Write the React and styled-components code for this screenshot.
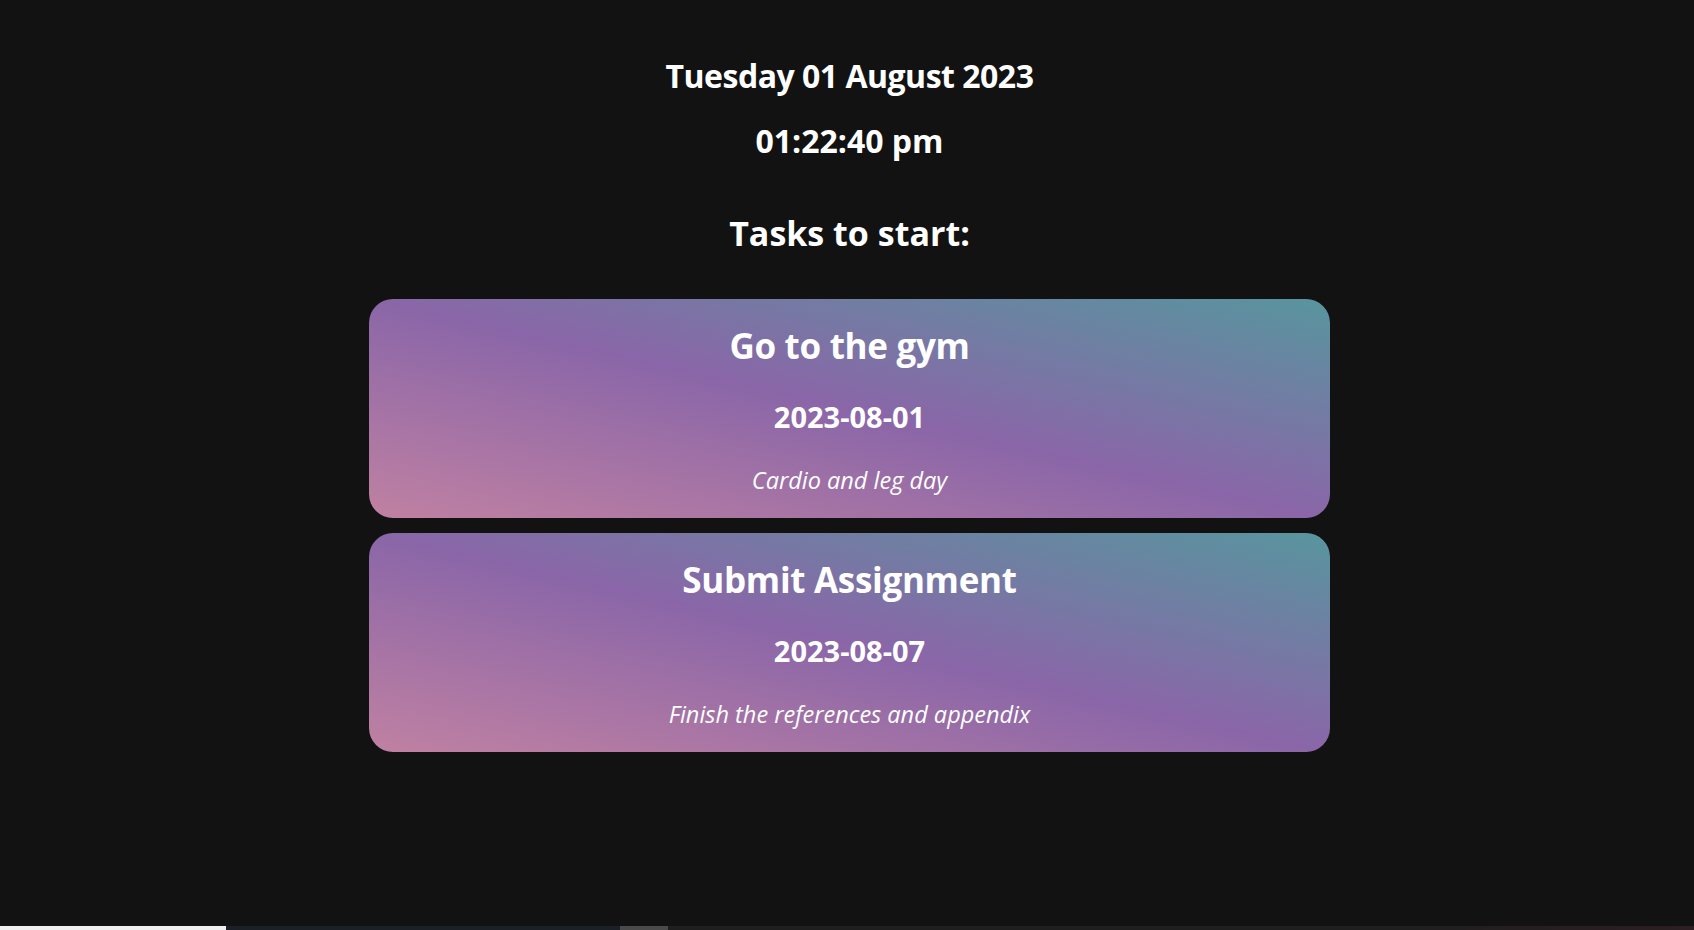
import styled, { createGlobalStyle } from "styled-components";

const GlobalStyle = createGlobalStyle`
  html, body {
    margin: 0;
    padding: 0;
    background: #121212;
  }
  body {
    font-family: "Open Sans", "Noto Sans", sans-serif;
    color: #ffffff;
  }
`;

const Page = styled.div`
  display: flex;
  flex-direction: column;
  height: 100vh;
  overflow: hidden;
`;

const Main = styled.main`
  flex: 1;
  display: flex;
  flex-direction: column;
  align-items: center;
  padding: 55.5px 0 0 5px;
`;

const Clock = styled.div`
  display: flex;
  flex-direction: column;
  align-items: center;
  gap: 25px;
`;

const ClockLine = styled.h2`
  margin: 0;
  font-size: 32px;
  line-height: 40px;
  font-weight: 700;
  letter-spacing: ${(p) => (p.$tight ? "-0.5px" : "0")};
`;

const Heading = styled.h1`
  margin: 51px 0 45px;
  font-size: 34px;
  line-height: 42px;
  font-weight: 700;
`;

const TaskList = styled.div`
  display: flex;
  flex-direction: column;
  gap: 15px;
  width: 961px;
`;

const Card = styled.div`
  display: flex;
  flex-direction: column;
  align-items: center;
  gap: 32px;
  padding: 25px 0 24px;
  border-radius: 24px;
  background: linear-gradient(to top right, #c081a2 0%, #8a66a8 50%, #58959e 100%);
`;

const CardTitle = styled.h3`
  margin: 0;
  font-size: 35px;
  line-height: 44px;
  font-weight: 700;
  letter-spacing: -0.3px;
`;

const CardDate = styled.h4`
  margin: 0;
  font-size: 29px;
  line-height: 34px;
  font-weight: 700;
`;

const CardNote = styled.p`
  margin: 0;
  font-size: 23.5px;
  line-height: 28px;
  font-style: italic;
`;

const Strip = styled.div`
  display: flex;
  height: 4px;
  flex-shrink: 0;
`;

const StripPart = styled.div`
  width: ${(p) => (p.w ? `${p.w}px` : "auto")};
  flex: ${(p) => (p.w ? "none" : "1")};
  background: ${(p) => p.bg};
`;

const tasks = [
  { title: "Go to the gym", date: "2023-08-01", note: "Cardio and leg day" },
  {
    title: "Submit Assignment",
    date: "2023-08-07",
    note: "Finish the references and appendix",
  },
];

export default function App() {
  return (
    <>
      <GlobalStyle />
      <Page>
        <Main>
          <Clock>
            <ClockLine $tight>Tuesday 01 August 2023</ClockLine>
            <ClockLine>01:22:40 pm</ClockLine>
          </Clock>
          <Heading>Tasks to start:</Heading>
          <TaskList>
            {tasks.map((t) => (
              <Card key={t.title}>
                <CardTitle>{t.title}</CardTitle>
                <CardDate>{t.date}</CardDate>
                <CardNote>{t.note}</CardNote>
              </Card>
            ))}
          </TaskList>
        </Main>
        <Strip>
          <StripPart w={226} bg="#efefef" />
          <StripPart w={394} bg="#1b1f26" />
          <StripPart w={48} bg="#4a4a4a" />
          <StripPart bg="linear-gradient(to right, #1e1e1e 70%, #2c1e22)" />
        </Strip>
      </Page>
    </>
  );
}
